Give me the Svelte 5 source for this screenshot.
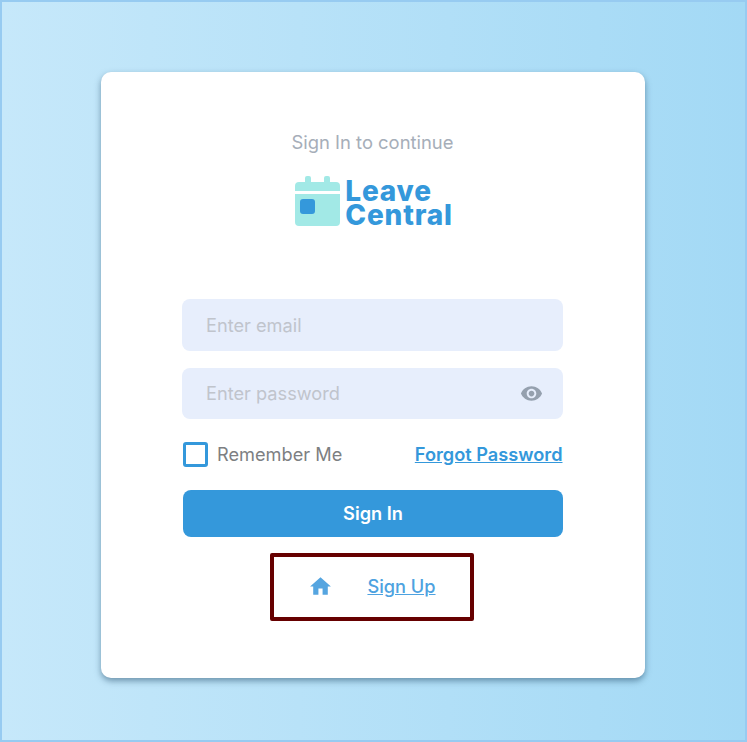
<script>
  let email = '';
  let password = '';
</script>

<main class="page">
  <section class="card">
    <p class="subtitle">Sign In to continue</p>

    <div class="logo">
      <svg class="logo_icon" width="45" height="50" viewBox="0 0 45 50">
        <rect x="10" y="0" width="6" height="8" rx="2" fill="#a2e9e6" />
        <rect x="29" y="0" width="6" height="8" rx="2" fill="#a2e9e6" />
        <path d="M0 15v-5a4 4 0 0 1 4-4h37a4 4 0 0 1 4 4v5z" fill="#a2e9e6" />
        <path d="M0 18h45v28a4 4 0 0 1-4 4H4a4 4 0 0 1-4-4z" fill="#a2e9e6" />
        <rect x="5" y="23" width="15" height="15" rx="3" fill="#3498db" />
      </svg>
      <div class="logo_text">Leave<br />Central</div>
    </div>

    <form class="form" on:submit|preventDefault>
      <input class="field" bind:value={email} placeholder="Enter email" />
      <div class="password">
        <input class="field" type="password" bind:value={password} placeholder="Enter password" />
        <svg class="eye" width="23" height="23" viewBox="0 0 24 24">
          <path fill="#95a0ae" d="M12 4.500C7 4.500 2.730 7.610 1 12c1.730 4.390 6 7.500 11 7.500s9.270-3.110 11-7.500c-1.730-4.390-6-7.500-11-7.500zM12 17c-2.760 0-5-2.240-5-5s2.240-5 5-5 5 2.240 5 5-2.240 5-5 5zm0-8c-1.660 0-3 1.340-3 3s1.340 3 3 3 3-1.340 3-3-1.340-3-3-3z" />
        </svg>
      </div>

      <div class="options">
        <label class="remember">
          <span class="checkbox"></span>
          <span class="remember_text">Remember Me</span>
        </label>
        <a class="link forgot" href="#forgot">Forgot Password</a>
      </div>

      <button class="submit" type="submit">Sign In</button>
    </form>

    <div class="signup">
      <svg class="home" width="25" height="25" viewBox="0 0 24 24">
        <path fill="#55a5e0" d="M10 20v-6h4v6h5v-8h3L12 3 2 12h3v8z" />
      </svg>
      <a class="link signup_link" href="#signup">Sign Up</a>
    </div>
  </section>
</main>

<style>
  :global(body) {
    margin: 0;
    font-family: Inter, "Liberation Sans", sans-serif;
  }

  .page {
    box-sizing: border-box;
    width: 747px;
    height: 742px;
    display: flex;
    justify-content: center;
    align-items: flex-start;
    padding-top: 70px;
    border: 2px solid #97cbf1;
    background: linear-gradient(90deg, #c6e8fa 0%, #a3d9f5 100%);
  }

  .card {
    box-sizing: border-box;
    width: 544px;
    height: 606px;
    margin-left: -1px;
    padding: 59px 82px 0 81px;
    background: white;
    border-radius: 10px;
    box-shadow: 0 3px 6px rgba(40, 80, 110, 0.55);
    display: flex;
    flex-direction: column;
    align-items: center;
  }

  .subtitle {
    margin: 0;
    font-size: 18.4px;
    line-height: 22px;
    color: #a6aeb9;
  }

  .logo {
    display: flex;
    align-items: center;
    gap: 5px;
    margin-top: 23px;
    margin-left: 3px;
    height: 50px;
  }

  .logo_text {
    padding-top: 3px;
    font-size: 28px;
    line-height: 24px;
    font-weight: 800;
    letter-spacing: 0.8px;
    color: #3498db;
  }

  .form {
    width: 100%;
    margin-top: 73px;
    display: flex;
    flex-direction: column;
  }

  .field {
    box-sizing: border-box;
    width: 100%;
    height: 52px;
    padding: 0 24px;
    border: none;
    outline: none;
    border-radius: 8px;
    background: #e7eefc;
    font-family: inherit;
    font-size: 18.2px;
  }

  .field::placeholder {
    color: #c0c4cc;
    opacity: 1;
  }

  .password {
    position: relative;
    margin-top: 17px;
  }

  .password .field {
    height: 51px;
    padding-bottom: 2px;
    display: block;
  }

  .eye {
    position: absolute;
    right: 20px;
    top: 14px;
  }

  .options {
    display: flex;
    justify-content: space-between;
    align-items: center;
    margin-top: 23px;
  }

  .remember {
    display: flex;
    align-items: center;
    gap: 9px;
    padding-left: 1px;
    font-size: 18.2px;
    color: #7d7f82;
  }

  .remember_text {
    margin-bottom: 2px;
  }

  .checkbox {
    box-sizing: border-box;
    width: 25px;
    height: 25px;
    border: 3px solid #3498db;
    border-radius: 3px;
  }

  .link {
    font-size: 18.2px;
    font-weight: 600;
    color: #3498db;
    text-decoration: underline;
  }

  .forgot {
    margin: 0 0.500px 2px 0;
  }

  .submit {
    height: 47px;
    margin-top: 23px;
    margin-left: 1px;
    padding-bottom: 3px;
    border: none;
    border-radius: 8px;
    background: #3498db;
    color: white;
    font-family: inherit;
    font-size: 18.2px;
    font-weight: 600;
  }

  .signup {
    box-sizing: border-box;
    width: 204px;
    height: 68px;
    margin-top: 16px;
    margin-right: 1px;
    border: 4px solid #660000;
    border-radius: 2px;
    display: flex;
    align-items: center;
    justify-content: center;
    gap: 34px;
  }

  .home {
    margin-bottom: 2px;
  }

  .signup_link {
    margin-bottom: 2px;
    font-weight: 500;
    color: #4ea2e0;
  }
</style>
